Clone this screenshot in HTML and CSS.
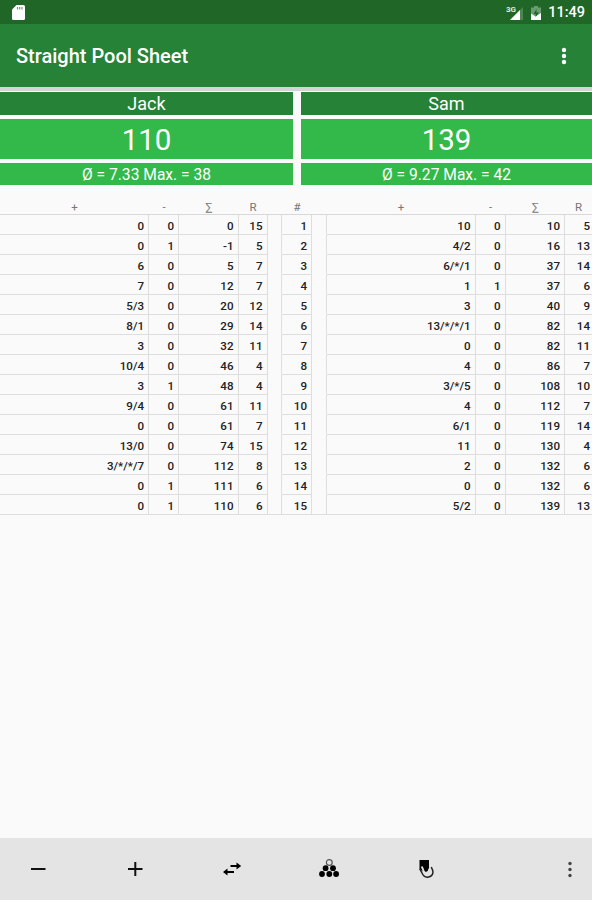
FILE: index.html
```html
<!DOCTYPE html>
<html lang="en">
<head>
    <meta charset="UTF-8">
    <meta name="viewport" content="width=device-width, initial-scale=1.0">
    <title>Straight Pool Sheet</title>
    <link rel="stylesheet" href="styles.css">
</head>
<body>
    <div class="app">
        <div class="status-bar">
            <svg class="sd-icon" width="14" height="16" viewBox="0 0 14 16"><path d="M4.500 0h7A1.500 1.500 0 0 1 13 1.500v12a1.500 1.500 0 0 1-1.500 1.500h-10A1.500 1.500 0 0 1 0 13.500V4.500z" fill="#fff"/><path d="M5.500 2v2.500M7.700 2v2.500M10 2v2.500" stroke="#6f9a74" stroke-width="1.200"/></svg>
            <div class="status-right">
                <svg width="18" height="16" viewBox="0 0 18 16"><text x="0" y="7" class="net">3G</text><path d="M17 2v13H4z" fill="#4d8553"/><path d="M14 5v10H4z" fill="#fff"/></svg>
                <svg width="10" height="15" viewBox="0 0 10 15"><path d="M3 0h4v1.500h3V14H0V1.500h3z" fill="#6b9b70"/><path d="M0 7.500l4.500 3L10 7v7H0z" fill="#fff"/><path d="M5.500 3L2.500 8h2.200v3L8 6.500H5.500z" fill="#1f6627"/></svg>
                <span class="clock">11:49</span>
            </div>
        </div>

        <div class="app-bar">
            <h1>Straight Pool Sheet</h1>
            <svg width="6" height="18" viewBox="0 0 6 18" fill="#fff"><circle cx="3" cy="3" r="2.200"/><circle cx="3" cy="9" r="2.200"/><circle cx="3" cy="15" r="2.200"/></svg>
        </div>

        <div class="players">
            <div class="player">
                <div class="name">Jack</div>
                <div class="score">110</div>
                <div class="stats">Ø = 7.33 Max. = 38</div>
            </div>
            <div class="player">
                <div class="name">Sam</div>
                <div class="score">139</div>
                <div class="stats">Ø = 9.27 Max. = 42</div>
            </div>
        </div>

        <table class="sheet">
            <colgroup>
                <col class="w-points"><col class="w-foul"><col class="w-sum"><col class="w-rack">
                <col class="w-gap"><col class="w-foul"><col class="w-gap">
                <col class="w-points"><col class="w-foul"><col class="w-sum"><col>
            </colgroup>
            <thead>
                <tr><th>+</th><th>-</th><th>∑</th><th>R</th><th></th><th>#</th><th></th><th>+</th><th>-</th><th>∑</th><th>R</th></tr>
            </thead>
            <tbody>
                <tr><td>0</td><td>0</td><td>0</td><td>15</td><td class="gap"></td><td>1</td><td class="gap"></td><td>10</td><td>0</td><td>10</td><td>5</td></tr>
                <tr><td>0</td><td>1</td><td>-1</td><td>5</td><td class="gap"></td><td>2</td><td class="gap"></td><td>4/2</td><td>0</td><td>16</td><td>13</td></tr>
                <tr><td>6</td><td>0</td><td>5</td><td>7</td><td class="gap"></td><td>3</td><td class="gap"></td><td>6/*/1</td><td>0</td><td>37</td><td>14</td></tr>
                <tr><td>7</td><td>0</td><td>12</td><td>7</td><td class="gap"></td><td>4</td><td class="gap"></td><td>1</td><td>1</td><td>37</td><td>6</td></tr>
                <tr><td>5/3</td><td>0</td><td>20</td><td>12</td><td class="gap"></td><td>5</td><td class="gap"></td><td>3</td><td>0</td><td>40</td><td>9</td></tr>
                <tr><td>8/1</td><td>0</td><td>29</td><td>14</td><td class="gap"></td><td>6</td><td class="gap"></td><td>13/*/*/1</td><td>0</td><td>82</td><td>14</td></tr>
                <tr><td>3</td><td>0</td><td>32</td><td>11</td><td class="gap"></td><td>7</td><td class="gap"></td><td>0</td><td>0</td><td>82</td><td>11</td></tr>
                <tr><td>10/4</td><td>0</td><td>46</td><td>4</td><td class="gap"></td><td>8</td><td class="gap"></td><td>4</td><td>0</td><td>86</td><td>7</td></tr>
                <tr><td>3</td><td>1</td><td>48</td><td>4</td><td class="gap"></td><td>9</td><td class="gap"></td><td>3/*/5</td><td>0</td><td>108</td><td>10</td></tr>
                <tr><td>9/4</td><td>0</td><td>61</td><td>11</td><td class="gap"></td><td>10</td><td class="gap"></td><td>4</td><td>0</td><td>112</td><td>7</td></tr>
                <tr><td>0</td><td>0</td><td>61</td><td>7</td><td class="gap"></td><td>11</td><td class="gap"></td><td>6/1</td><td>0</td><td>119</td><td>14</td></tr>
                <tr><td>13/0</td><td>0</td><td>74</td><td>15</td><td class="gap"></td><td>12</td><td class="gap"></td><td>11</td><td>0</td><td>130</td><td>4</td></tr>
                <tr><td>3/*/*/7</td><td>0</td><td>112</td><td>8</td><td class="gap"></td><td>13</td><td class="gap"></td><td>2</td><td>0</td><td>132</td><td>6</td></tr>
                <tr><td>0</td><td>1</td><td>111</td><td>6</td><td class="gap"></td><td>14</td><td class="gap"></td><td>0</td><td>0</td><td>132</td><td>6</td></tr>
                <tr><td>0</td><td>1</td><td>110</td><td>6</td><td class="gap"></td><td>15</td><td class="gap"></td><td>5/2</td><td>0</td><td>139</td><td>13</td></tr>
            </tbody>
        </table>

        <div class="bottom-bar">
            <div class="actions">
                <!-- minus -->
                <svg width="20" height="20" viewBox="0 0 20 20"><path d="M3 10h14.500" stroke="#111" stroke-width="2"/></svg>
                <!-- plus -->
                <svg width="20" height="20" viewBox="0 0 20 20"><path d="M3 10h14.500M10.300 3v14" stroke="#111" stroke-width="2"/></svg>
                <!-- switch player -->
                <svg width="20" height="20" viewBox="0 0 20 20"><path d="M8.500 7H15M12 13H5" stroke="#000" stroke-width="2"/><path d="M14.500 3.600L19.200 7l-4.700 3.400zM5.500 9.600L1 13l4.500 3.400z"/></svg>
                <!-- new rack -->
                <svg width="20" height="20" viewBox="0 0 20 20"><circle cx="10.300" cy="3.500" r="2.900" fill="none" stroke="#555" stroke-width="1.200"/><circle cx="6.600" cy="9.200" r="2.900"/><circle cx="14" cy="9.200" r="2.900"/><circle cx="3" cy="15" r="2.900"/><circle cx="10.300" cy="15" r="2.900"/><circle cx="17.100" cy="15" r="2.900"/></svg>
                <!-- foul -->
                <svg width="20" height="20" viewBox="0 0 20 20"><path d="M3.500 1H13v8l-2 3.500H7L3.500 10.500z"/><path d="M5.800 7.500l2.200 5.500c1 2.500 2.700 3.700 4.700 3.200 2.500-.6 3.600-2.700 3.100-5l-1.300-3" fill="none" stroke="#e4e4e4" stroke-width="2"/><path d="M3.800 10l2.200 4c1.300 3 4 4.600 6.500 4 3.500-.7 5-3.300 4.300-6.200L15.300 8" fill="none" stroke="#222" stroke-width="1.500"/><path d="M7.500 6H12v5.500l-2.500 1.300z"/></svg>
            </div>
            <svg class="more" width="6" height="18" viewBox="0 0 6 18" fill="#444"><circle cx="3" cy="3.500" r="1.700"/><circle cx="3" cy="9.500" r="1.700"/><circle cx="3" cy="15.500" r="1.700"/></svg>
        </div>
    </div>
</body>
</html>
```

FILE: styles.css
```css
* {
    margin: 0;
    padding: 0;
    box-sizing: border-box;
}

body {
    font-family: Roboto, "Liberation Sans", sans-serif;
    background-color: #fafafa;
    color: #222;
}

svg {
    display: block;
}

.app {
    display: flex;
    flex-direction: column;
    height: 900px;
}

/* Top bars */
.status-bar {
    display: flex;
    justify-content: space-between;
    align-items: center;
    height: 24px;
    padding: 0 7px 0 12px;
    background-color: #1f6627;
    color: white;
}

.sd-icon {
    margin-top: 2px;
}

.status-right {
    display: flex;
    align-items: center;
    gap: 7px;
}

.status-right svg {
    margin-top: 2px;
}

.net {
    font-size: 8px;
    font-weight: bold;
    fill: #dfeae0;
}

.clock {
    font-size: 14.5px;
    font-weight: 500;
    line-height: 24px;
    padding-top: 2px;
}

.app-bar {
    display: flex;
    justify-content: space-between;
    align-items: center;
    height: 63px;
    padding: 0 25px 0 16px;
    background-color: #268236;
    color: white;
}

h1 {
    font-size: 20px;
    font-weight: 500;
    padding-top: 1px;
}

/* Players */
.players {
    display: grid;
    grid-template-columns: 293px 291px;
    column-gap: 8px;
    padding-top: 1px;
    border-top: 4px solid #d4d4d4;
}

.player {
    display: flex;
    flex-direction: column;
    gap: 4px;
    color: white;
    text-align: center;
}

.name {
    height: 23px;
    line-height: 24px;
    font-size: 18px;
    background-color: #268236;
}

.score {
    height: 40px;
    line-height: 43px;
    font-size: 29.5px;
    background-color: #33b949;
}

.stats {
    height: 22px;
    line-height: 24px;
    font-size: 15.6px;
    background-color: #33b949;
}

/* Innings */
.sheet {
    width: 592px;
    margin-top: 15px;
    table-layout: fixed;
    border-spacing: 0;
}

.w-points {
    width: 149px;
}

.w-foul {
    width: 30px;
}

.w-sum {
    width: 59.5px;
}

.w-rack {
    width: 29px;
}

.w-gap {
    width: 14.5px;
}

th {
    height: 15px;
    line-height: 14px;
    font-size: 11.5px;
    font-weight: normal;
    color: #777;
    border-bottom: 1px solid #d8d8d8;
}

td {
    height: 20px;
    padding: 4px 4px 0 0;
    line-height: 15px;
    font-size: 11.6px;
    font-weight: 500;
    text-align: right;
    border-right: 1px solid #dedede;
    border-bottom: 1px solid #dedede;
}

td:last-child {
    padding-right: 2px;
    border-right: none;
}

.gap {
    border-bottom-color: transparent;
}

tr:last-child .gap {
    border-bottom-color: #dedede;
}

/* Bottom toolbar */
.bottom-bar {
    display: flex;
    justify-content: space-between;
    align-items: center;
    height: 62px;
    margin-top: auto;
    padding: 0 19px 0 28px;
    background-color: #e4e4e4;
}

.actions {
    display: flex;
    gap: 77px;
}
```
